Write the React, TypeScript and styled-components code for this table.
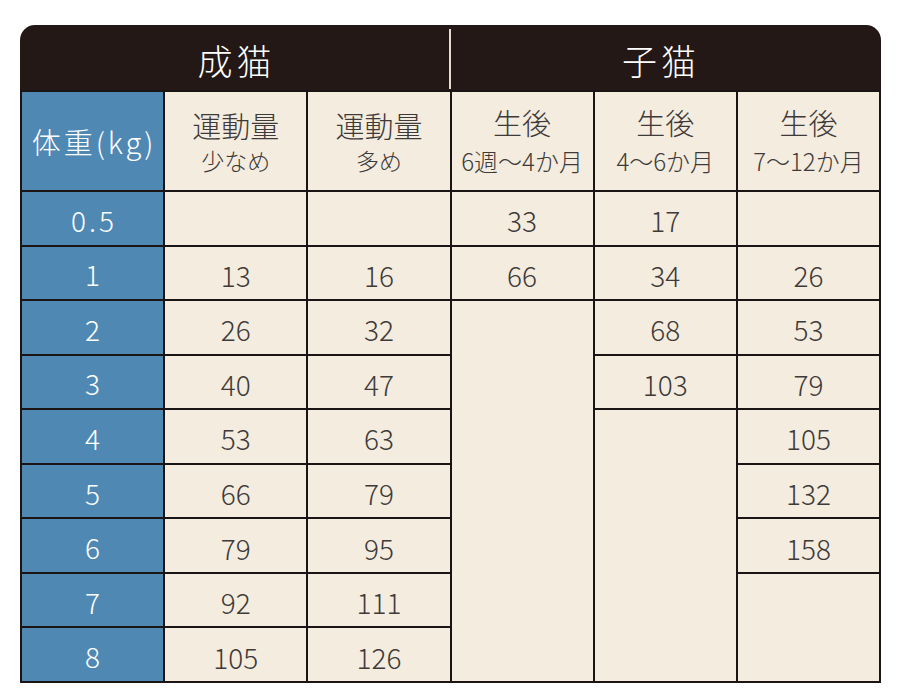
import * as React from 'react';
import styled, { createGlobalStyle } from 'styled-components';

type Cell = { text: string; span?: number };

const weights = ['0.5', '1', '2', '3', '4', '5', '6', '7', '8'];

// one list per column, top to bottom; span merges rows
const columns: Cell[][] = [
  [{ text: '' }, { text: '13' }, { text: '26' }, { text: '40' }, { text: '53' }, { text: '66' }, { text: '79' }, { text: '92' }, { text: '105' }],
  [{ text: '' }, { text: '16' }, { text: '32' }, { text: '47' }, { text: '63' }, { text: '79' }, { text: '95' }, { text: '111' }, { text: '126' }],
  [{ text: '33' }, { text: '66' }, { text: '', span: 7 }],
  [{ text: '17' }, { text: '34' }, { text: '68' }, { text: '103' }, { text: '', span: 5 }],
  [{ text: '' }, { text: '26' }, { text: '53' }, { text: '79' }, { text: '105' }, { text: '132' }, { text: '158' }, { text: '', span: 2 }],
];

const heads = [
  { main: '運動量', sub: '少なめ', small: true },
  { main: '運動量', sub: '多め', small: true },
  { main: '生後', sub: '6週〜4か月', small: false },
  { main: '生後', sub: '4〜6か月', small: false },
  { main: '生後', sub: '7〜12か月', small: false },
];

const App = () => {
  return (
    <Page>
      <GlobalStyle />
      <Table>
        <TopBar>
          <TopLabel $width={429}>成猫</TopLabel>
          <Divider />
          <TopLabel $shift={14}>子猫</TopLabel>
        </TopBar>
        <Grid>
          <WeightHead $col={1} $row={1}>体重(kg)</WeightHead>
          {heads.map((h, i) => (
            <Head key={i} $col={i + 2} $row={1}>
              <HeadMain>{h.main}</HeadMain>
              <HeadSub $small={h.small}>{h.sub}</HeadSub>
            </Head>
          ))}
          {weights.map((w, i) => (
            <WeightCell key={w} $col={1} $row={i + 2}>{w}</WeightCell>
          ))}
          {columns.map((col, c) => {
            let row = 2;
            return col.map((cell, r) => {
              const span = cell.span || 1;
              const el = (
                <ValueCell key={`${c}-${r}`} $col={c + 2} $row={row} $span={span}>
                  {cell.text}
                </ValueCell>
              );
              row += span;
              return el;
            });
          })}
        </Grid>
      </Table>
    </Page>
  );
};

const GlobalStyle = createGlobalStyle`
  html, body {
    margin: 0;
    padding: 0;
    background: #ffffff;
  }
  body {
    font-family: "Noto Sans CJK JP", "Noto Sans", sans-serif;
  }
`;

const Page = styled.div`
  width: 900px;
  height: 700px;
  padding: 25px 0 0 20px;
  box-sizing: border-box;
`;

const Table = styled.div`
  width: 861px;
  display: flex;
  flex-direction: column;
`;

const TopBar = styled.div`
  height: 65px;
  background: #231815;
  border-radius: 15px 15px 0 0;
  display: flex;
  align-items: center;
`;

const TopLabel = styled.div<{ $shift?: number; $width?: number }>`
  flex: ${p => (p.$width ? `0 0 ${p.$width}px` : '1')};
  box-sizing: border-box;
  text-align: center;
  color: #ffffff;
  font-size: 35px;
  font-weight: 300;
  letter-spacing: 4px;
  padding-left: 4px;
  padding-right: ${p => p.$shift || 0}px;
  margin-top: 4px;
`;

const Divider = styled.div`
  width: 2px;
  height: 60px;
  margin-top: 2px;
  background: #e6ddcc;
`;

const Grid = styled.div`
  display: grid;
  grid-template-columns: repeat(6, 1fr);
  grid-template-rows: 98px repeat(9, 1fr);
  gap: 2px;
  padding: 2px;
  height: 593px;
  box-sizing: border-box;
  background: #1a1514;
`;

interface PlaceProps {
  $col: number;
  $row: number;
  $span?: number;
}

const CellBase = styled.div<PlaceProps>`
  grid-column: ${p => p.$col};
  grid-row: ${p => p.$row} / span ${p => p.$span || 1};
  display: flex;
  flex-direction: column;
  align-items: center;
  justify-content: center;
`;

const WeightHead = styled(CellBase)`
  background: #4f89b3;
  color: #ffffff;
  font-size: 29px;
  font-weight: 300;
  letter-spacing: 3px;
  padding-left: 3px;
`;

const WeightCell = styled(CellBase)`
  background: #4f89b3;
  color: #ffffff;
  font-size: 28px;
  font-weight: 300;
  letter-spacing: 3px;
  padding-left: 3px;
  padding-top: 3px;
`;

const Head = styled(CellBase)`
  background: #f3ecdf;
  color: #3e3a39;
`;

const HeadMain = styled.div`
  font-size: 29px;
  line-height: 38px;
  font-weight: 300;
`;

const HeadSub = styled.div<{ $small: boolean }>`
  font-size: ${p => (p.$small ? '23px' : '24px')};
  line-height: ${p => (p.$small ? '32px' : '38px')};
  margin-top: ${p => (p.$small ? '0' : '1px')};
  font-weight: 300;
  white-space: nowrap;
`;

const ValueCell = styled(CellBase)`
  background: #f3ecdf;
  color: #3e3a39;
  font-size: 28px;
  font-weight: 300;
  padding-top: 4px;
`;

export default App;
